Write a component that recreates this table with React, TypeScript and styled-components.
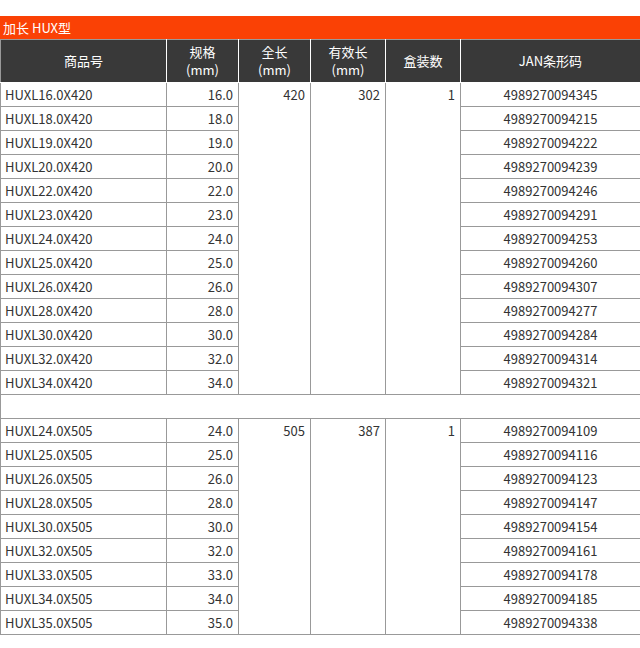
import React from "react";
import styled, { createGlobalStyle } from "styled-components";

const Global = createGlobalStyle`
  html, body { margin: 0; padding: 0; background: #fff; }
  body { font-family: "Noto Sans CJK JP", "Noto Sans", sans-serif; font-size: 13px; color: #333; }
`;

const Page = styled.div`
  padding-top: 16px;
  width: 640px;
`;

const TitleBar = styled.div`
  background: #fa4105;
  color: #fff;
  height: 23px;
  line-height: 23px;
  padding-left: 3px;
  font-size: 13px;
`;

const Table = styled.table`
  width: 640px;
  border-collapse: collapse;
  table-layout: fixed;
`;

const HeadCell = styled.th`
  background: #393939;
  color: #fff;
  font-weight: normal;
  text-align: center;
  vertical-align: middle;
  height: 42px;
  padding: 0;
  line-height: 18px;
  border: 1px solid #fff;
  border-top: 1px solid #999;
  &:first-child { border-left: 1px solid #999; }
  &:last-child { border-right: 1px solid #999; }
`;

const Cell = styled.td<{ $align?: "left" | "right" | "center" }>`
  border: 1px solid #999;
  height: 23px;
  line-height: 23px;
  padding: 0 ${(p) => (p.$align === "left" ? "0 0 4px" : p.$align === "right" ? "5px 0 0" : "0 0 0")};
  text-align: ${(p) => p.$align ?? "left"};
  vertical-align: top;
  white-space: nowrap;
  overflow: hidden;
`;

const Spacer = styled.td`
  border: 1px solid #999;
  height: 23px;
  padding: 0;
`;

type Group = { len: string; eff: string; box: string; rows: [string, string, string][] };

const groups: Group[] = [
  {
    len: "420",
    eff: "302",
    box: "1",
    rows: [
      ["HUXL16.0X420", "16.0", "4989270094345"],
      ["HUXL18.0X420", "18.0", "4989270094215"],
      ["HUXL19.0X420", "19.0", "4989270094222"],
      ["HUXL20.0X420", "20.0", "4989270094239"],
      ["HUXL22.0X420", "22.0", "4989270094246"],
      ["HUXL23.0X420", "23.0", "4989270094291"],
      ["HUXL24.0X420", "24.0", "4989270094253"],
      ["HUXL25.0X420", "25.0", "4989270094260"],
      ["HUXL26.0X420", "26.0", "4989270094307"],
      ["HUXL28.0X420", "28.0", "4989270094277"],
      ["HUXL30.0X420", "30.0", "4989270094284"],
      ["HUXL32.0X420", "32.0", "4989270094314"],
      ["HUXL34.0X420", "34.0", "4989270094321"],
    ],
  },
  {
    len: "505",
    eff: "387",
    box: "1",
    rows: [
      ["HUXL24.0X505", "24.0", "4989270094109"],
      ["HUXL25.0X505", "25.0", "4989270094116"],
      ["HUXL26.0X505", "26.0", "4989270094123"],
      ["HUXL28.0X505", "28.0", "4989270094147"],
      ["HUXL30.0X505", "30.0", "4989270094154"],
      ["HUXL32.0X505", "32.0", "4989270094161"],
      ["HUXL33.0X505", "33.0", "4989270094178"],
      ["HUXL34.0X505", "34.0", "4989270094185"],
      ["HUXL35.0X505", "35.0", "4989270094338"],
    ],
  },
];

export default function App() {
  return (
    <Page>
      <Global />
      <TitleBar>加长 HUX型</TitleBar>
      <Table>
        <colgroup>
          <col style={{ width: 166 }} />
          <col style={{ width: 72 }} />
          <col style={{ width: 72 }} />
          <col style={{ width: 75 }} />
          <col style={{ width: 75 }} />
          <col style={{ width: 180 }} />
        </colgroup>
        <thead>
          <tr>
            <HeadCell>商品号</HeadCell>
            <HeadCell>
              规格
              <br />
              (mm)
            </HeadCell>
            <HeadCell>
              全长
              <br />
              (mm)
            </HeadCell>
            <HeadCell>
              有效长
              <br />
              (mm)
            </HeadCell>
            <HeadCell>盒装数</HeadCell>
            <HeadCell>JAN条形码</HeadCell>
          </tr>
        </thead>
        <tbody>
          {groups.map((g, gi) => (
            <React.Fragment key={g.len}>
              {gi > 0 && (
                <tr>
                  <Spacer colSpan={6} />
                </tr>
              )}
              {g.rows.map((r, i) => (
                <tr key={r[0]}>
                  <Cell $align="left">{r[0]}</Cell>
                  <Cell $align="right">{r[1]}</Cell>
                  {i === 0 && (
                    <>
                      <Cell $align="right" rowSpan={g.rows.length}>{g.len}</Cell>
                      <Cell $align="right" rowSpan={g.rows.length}>{g.eff}</Cell>
                      <Cell $align="right" rowSpan={g.rows.length}>{g.box}</Cell>
                    </>
                  )}
                  <Cell $align="center">{r[2]}</Cell>
                </tr>
              ))}
            </React.Fragment>
          ))}
        </tbody>
      </Table>
    </Page>
  );
}
